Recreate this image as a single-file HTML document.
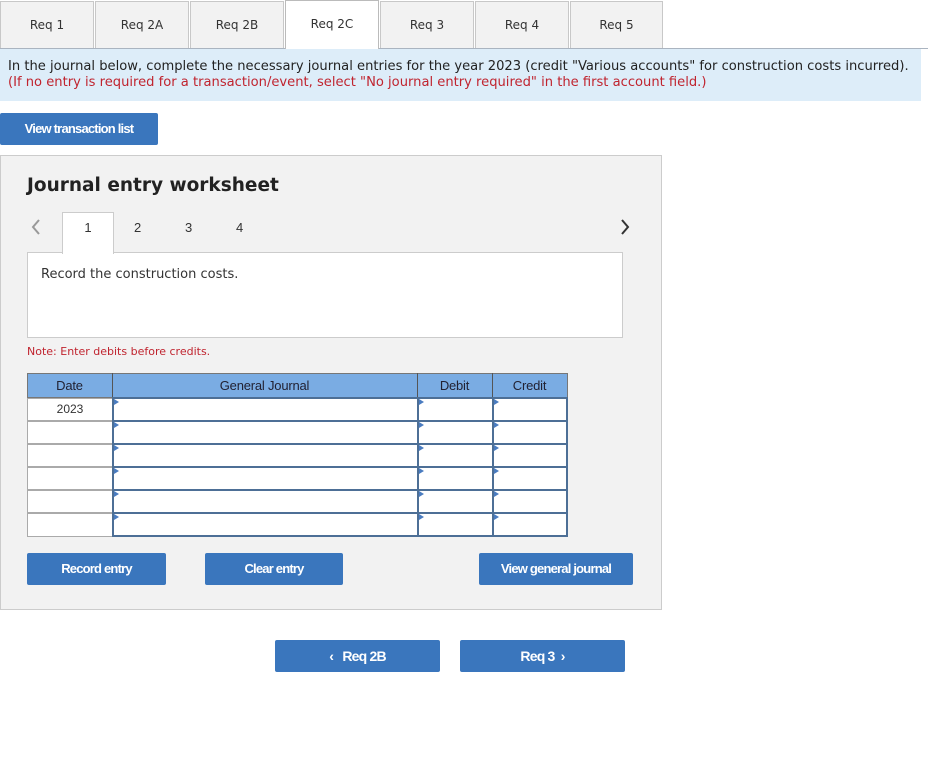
<!DOCTYPE html>
<html><head><meta charset="utf-8"><style>
*{margin:0;padding:0;box-sizing:border-box}
body{width:928px;height:775px;background:#fff;position:relative;font-family:"DejaVu Sans","Liberation Sans",sans-serif;overflow:hidden}
.a{position:absolute}
.tab{position:absolute;top:1px;height:47px;background:#f2f2f2;border:1px solid #c8c8c8;border-bottom:none;font-size:12px;color:#333;text-align:center;line-height:46px}
.tab.act{background:#fff;top:0;height:49px;border-color:#bbb}
.btn{position:absolute;background:#3a76bd;color:#fff;font-family:"Liberation Sans",sans-serif;font-weight:bold;font-size:13px;text-align:center;border-radius:2px;letter-spacing:-0.8px}
.c{position:absolute;background:#fff;border:2px solid #4d6f96}
.d{position:absolute;background:#fff;border:1px solid #aaa;font-size:12px;text-align:center;color:#333;line-height:21px;font-family:"Liberation Sans",sans-serif}
.c::before{content:"";position:absolute;left:0;top:0;border-left:5px solid #4a7cc0;border-top:3px solid transparent;border-bottom:3px solid transparent}
.h{position:absolute;top:378px;text-align:center;font-family:'Liberation Sans',sans-serif;font-size:13px;color:#223;letter-spacing:-0.2px}
</style></head><body>
<div class="a" style="left:0;top:48px;width:928px;height:1px;background:#aab4c0"></div>
<div class="tab" style="left:0;width:94px">Req 1</div>
<div class="tab" style="left:95px;width:94px">Req 2A</div>
<div class="tab" style="left:190px;width:94px">Req 2B</div>
<div class="tab act" style="left:285px;width:94px">Req 2C</div>
<div class="tab" style="left:380px;width:94px">Req 3</div>
<div class="tab" style="left:475px;width:94px">Req 4</div>
<div class="tab" style="left:570px;width:93px">Req 5</div>
<div class="a" style="left:0;top:49px;width:921px;height:52px;background:#ddedf9;font-size:13.1px;line-height:16px;padding:10px 0 0 8px;color:#222;white-space:nowrap">In the journal below, complete the necessary journal entries for the year 2023 (credit "Various accounts" for construction costs incurred).<br><span style="color:#c0242f">(If no entry is required for a transaction/event, select "No journal entry required" in the first account field.)</span></div>
<div class="btn" style="left:0;top:113px;width:158px;height:32px;line-height:32px">View transaction list</div>
<div class="a" style="left:0;top:155px;width:662px;height:455px;background:#f2f2f2;border:1px solid #ccc"></div>
<div class="a" style="left:27px;top:175px;font-size:18.5px;font-weight:bold;color:#222">Journal entry worksheet</div>
<svg class="a" style="left:30px;top:218px" width="12" height="18"><path d="M9 2 L3 9 L9 16" fill="none" stroke="#999" stroke-width="2"/></svg>
<svg class="a" style="left:619px;top:218px" width="12" height="18"><path d="M3 2 L9 9 L3 16" fill="none" stroke="#333" stroke-width="2"/></svg>
<div class="a" style="left:27px;top:252px;width:596px;height:86px;background:#fff;border:1px solid #ccc"></div>
<div class="a" style="left:62px;top:212px;width:52px;height:42px;background:#fff;border:1px solid #ccc;border-bottom:none;font-family:'Liberation Sans',sans-serif;font-size:13px;text-align:center;line-height:30px;color:#333">1</div>
<div class="a" style="left:134px;top:220px;font-family:'Liberation Sans',sans-serif;font-size:13px;color:#333">2</div>
<div class="a" style="left:185px;top:220px;font-family:'Liberation Sans',sans-serif;font-size:13px;color:#333">3</div>
<div class="a" style="left:236px;top:220px;font-family:'Liberation Sans',sans-serif;font-size:13px;color:#333">4</div>
<div class="a" style="left:41px;top:267px;font-size:13px;color:#333">Record the construction costs.</div>
<div class="a" style="left:27px;top:345px;font-size:11px;color:#c0242f">Note: Enter debits before credits.</div>
<div class="a" style="left:27px;top:373px;width:541px;height:25px;background:#7aace3;border:1px solid #777"></div>
<div class="a" style="left:112px;top:373px;width:1px;height:25px;background:#555"></div>
<div class="a" style="left:417px;top:373px;width:1px;height:25px;background:#555"></div>
<div class="a" style="left:492px;top:373px;width:1px;height:25px;background:#555"></div>
<div class="h" style="left:27px;width:85px">Date</div>
<div class="h" style="left:112px;width:305px">General Journal</div>
<div class="h" style="left:417px;width:75px">Debit</div>
<div class="h" style="left:492px;width:75px">Credit</div>
<div class="d" style="left:27px;top:398px;width:86px;height:23px">2023</div>
<div class="d" style="left:27px;top:421px;width:86px;height:23px"></div>
<div class="d" style="left:27px;top:444px;width:86px;height:23px"></div>
<div class="d" style="left:27px;top:467px;width:86px;height:23px"></div>
<div class="d" style="left:27px;top:490px;width:86px;height:23px"></div>
<div class="d" style="left:27px;top:513px;width:86px;height:24px"></div>
<div class="c" style="left:112px;top:397px;width:307px;height:25px"></div><div class="c" style="left:417px;top:397px;width:77px;height:25px"></div><div class="c" style="left:492px;top:397px;width:76px;height:25px"></div>
<div class="c" style="left:112px;top:420px;width:307px;height:25px"></div><div class="c" style="left:417px;top:420px;width:77px;height:25px"></div><div class="c" style="left:492px;top:420px;width:76px;height:25px"></div>
<div class="c" style="left:112px;top:443px;width:307px;height:25px"></div><div class="c" style="left:417px;top:443px;width:77px;height:25px"></div><div class="c" style="left:492px;top:443px;width:76px;height:25px"></div>
<div class="c" style="left:112px;top:466px;width:307px;height:25px"></div><div class="c" style="left:417px;top:466px;width:77px;height:25px"></div><div class="c" style="left:492px;top:466px;width:76px;height:25px"></div>
<div class="c" style="left:112px;top:489px;width:307px;height:25px"></div><div class="c" style="left:417px;top:489px;width:77px;height:25px"></div><div class="c" style="left:492px;top:489px;width:76px;height:25px"></div>
<div class="c" style="left:112px;top:512px;width:307px;height:25px"></div><div class="c" style="left:417px;top:512px;width:77px;height:25px"></div><div class="c" style="left:492px;top:512px;width:76px;height:25px"></div>
<div class="btn" style="left:27px;top:553px;width:139px;height:32px;line-height:32px">Record entry</div>
<div class="btn" style="left:205px;top:553px;width:138px;height:32px;line-height:32px">Clear entry</div>
<div class="btn" style="left:479px;top:553px;width:154px;height:32px;line-height:32px">View general journal</div>
<div class="btn" style="left:275px;top:640px;width:165px;height:32px;line-height:32px;font-size:14px">&lsaquo;&nbsp;&nbsp; Req 2B</div>
<div class="btn" style="left:460px;top:640px;width:165px;height:32px;line-height:32px;font-size:14px">Req 3 &nbsp;&rsaquo;</div>
</body></html>
